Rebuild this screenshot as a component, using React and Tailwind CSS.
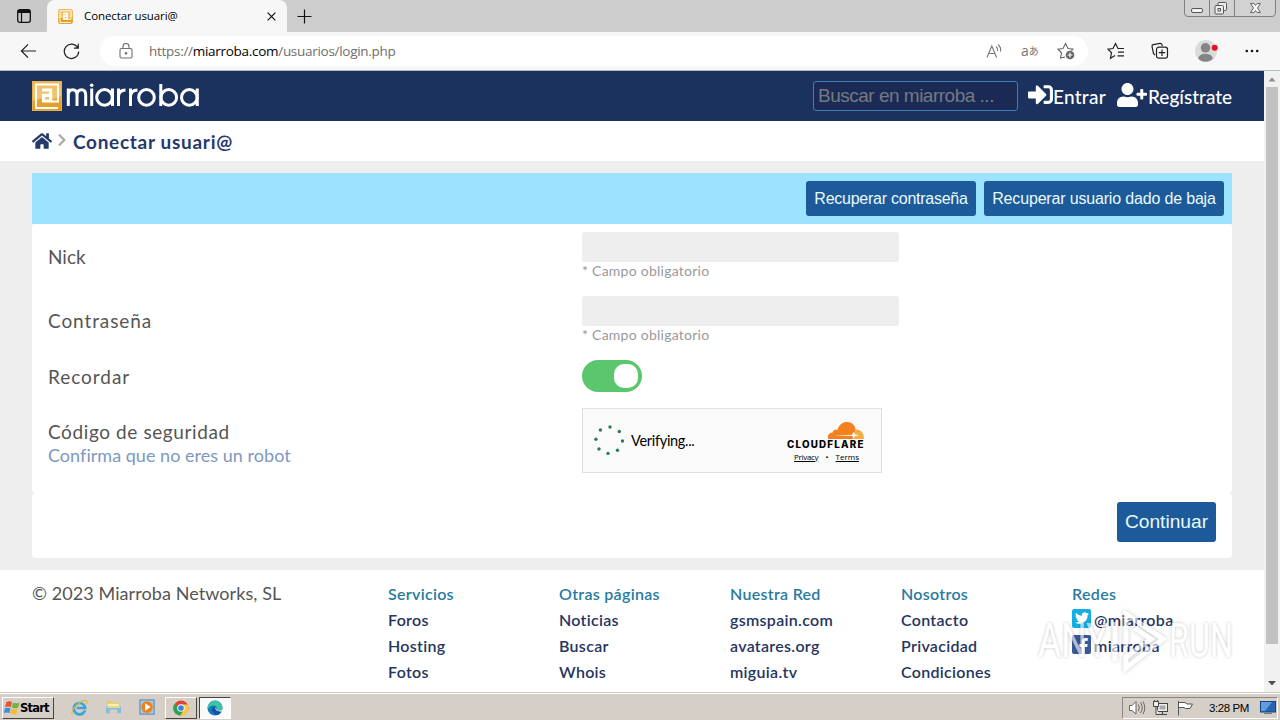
import React from "react";
import { FaHome, FaSignInAlt, FaUserPlus, FaChevronRight, FaTwitter, FaFacebookF } from "react-icons/fa";

const lato = "font-['Lato','Open_Sans',sans-serif]";
const arial = "font-['Liberation_Sans',sans-serif]";
const ui = "font-['Open_Sans','Noto_Sans',sans-serif]";

function AtLogo({ className, id }) {
  return (
    <svg viewBox="0 0 30 30" className={className}>
      <defs>
        <linearGradient id={id} x1="0" y1="0" x2="0" y2="1">
          <stop offset="0" stopColor="#f0b95a" />
          <stop offset="0.5" stopColor="#efc878" />
          <stop offset="1" stopColor="#e2a02c" />
        </linearGradient>
      </defs>
      <rect width="30" height="30" fill="#e8b04a" />
      <rect x="1" y="1" width="28" height="28" fill={`url(#${id})`} />
      <path d="M1 20C10 15 18 22 29 15V29H1Z" fill="#e09c22" opacity="0.75" />
      <path d="M26 27H4V3.5H26V20.5H19" fill="none" stroke="#fff" strokeWidth="1.8" />
      <path d="M10 9H18.6V21.5M18 14.3H11.6V20H18" fill="none" stroke="#fff" strokeWidth="3.2" />
    </svg>
  );
}

function TitleBar() {
  return (
    <div className="flex h-8 shrink-0 items-stretch bg-[#cdcdcd]">
      <div className="flex w-[47px] items-center justify-center rounded-br-md bg-[#c9c9c9]">
        <svg viewBox="0 0 14 14" className="h-3.5 w-3.5">
          <rect x="0.7" y="0.7" width="12.6" height="12.6" rx="2" fill="none" stroke="#111" strokeWidth="1.3" />
          <path d="M1 2Q1 1 2 1H12Q13 1 13 2V4H1Z" fill="#111" />
          <path d="M4.5 4V13" stroke="#111" strokeWidth="1.2" />
        </svg>
      </div>
      <div className="flex w-[240px] items-center rounded-t-lg bg-[#f7f7f7] pl-[11px] pr-[11px]">
        <AtLogo id="tabLogo" className="h-[15px] w-[15px] rounded-[3px]" />
        <span className={`${ui} ml-[11px] grow whitespace-nowrap text-[11.5px] leading-4 tracking-[-0.1px] text-black`}>Conectar usuari@</span>
        <svg viewBox="0 0 10 10" className="h-[9px] w-[9px]">
          <path d="M0.7 0.7L9.3 9.3M9.3 0.7L0.7 9.3" stroke="#111" strokeWidth="1.3" />
        </svg>
      </div>
      <div className="flex w-[35px] items-center justify-center">
        <svg viewBox="0 0 15 15" className="h-[15px] w-[15px]">
          <path d="M7.5 0.5V14.5M0.5 7.5H14.5" stroke="#111" strokeWidth="1.2" />
        </svg>
      </div>
      <div className="grow" />
      <svg viewBox="0 0 94 18" className="mr-[3px] h-[18px] w-[94px]">
        <path d="M1.5 0V13Q1.5 16.5 5 16.5H89Q92.5 16.5 92.5 13V0M26.5 0V16M51.5 0V16" fill="#d2d2d2" stroke="#808080" />
        <rect x="8.5" y="8.5" width="11" height="4" rx="1.5" fill="#f5f5f5" stroke="#555" />
        <rect x="35" y="2.5" width="8.5" height="8" rx="1" fill="#eee" stroke="#555" />
        <rect x="32" y="5.5" width="8.5" height="8.5" rx="1" fill="#eee" stroke="#555" />
        <rect x="35" y="8.5" width="2.5" height="2.5" fill="#eee" stroke="#555" />
        <path d="M67.5 3.5H71L72.5 5.5L74 3.5H77.5L74.5 8L77.5 12.5H74L72.5 10.5L71 12.5H67.5L70.5 8Z" fill="#f5f5f5" stroke="#666" />
      </svg>
    </div>
  );
}

function Toolbar() {
  return (
    <div className="flex h-[39px] shrink-0 items-center border-b border-[#b3bcbf] bg-[#f7f7f7]">
      <svg viewBox="0 0 18 16" className="ml-5 h-4 w-[17px]" fill="none" stroke="#222" strokeWidth="1.3">
        <path d="M17 8H1.5M8.5 1L1.5 8L8.5 15" />
      </svg>
      <svg viewBox="0 0 18 18" className="ml-[26px] h-[17px] w-[17px]" fill="none" stroke="#222" strokeWidth="1.3">
        <path d="M15.6 5A7.6 7.6 0 1 0 16.6 9M16.2 0.8V5.4H11.6" />
      </svg>
      <div className="ml-5 flex h-[30px] w-[988px] items-center rounded-full bg-white">
        <svg viewBox="0 0 14 16" className="ml-[19px] h-4 w-[14px]" fill="none" stroke="#707070" strokeWidth="1.1">
          <rect x="1" y="5.5" width="12" height="9.5" rx="1.5" />
          <path d="M4 5.5V3.5A3 3 0 0 1 10 3.5V5.5" />
          <circle cx="7" cy="10.3" r="0.8" fill="#707070" />
        </svg>
        <span className={`${ui} ml-4 grow whitespace-nowrap text-[13.5px] leading-5 tracking-[-0.29px] text-[#6e6e6e]`}>
          https://<span className="text-black">miarroba.com</span>/usuarios/login.php
        </span>
        <svg viewBox="0 0 17 16" className="h-4 w-[17px]" fill="none" stroke="#777" strokeWidth="1.1">
          <path d="M1 14.5L5.8 3L10.6 14.5M2.7 10.5H9M10 3.5Q12 5 11.5 8M12 1.5Q15.5 4.5 14.5 8.5" />
        </svg>
        <span className="ml-[18px] flex w-[18px] items-center whitespace-nowrap font-['Open_Sans','Noto_Sans_CJK_JP',sans-serif] leading-4 text-[#777]">
          <span className="text-[14px]">a</span><span className="text-[10px]">あ</span>
        </span>
        <svg viewBox="0 0 18 18" className="ml-[18px] mr-[13px] h-[18px] w-[18px]" fill="none" stroke="#666" strokeWidth="1.1">
          <path d="M8 15L3.5 16L4.5 10.8L1 7.2L6 6.5L8.5 1.5L11 6.5L16 7.2L14.5 8.7" />
          <circle cx="13" cy="13" r="4.3" fill="#666" stroke="none" />
          <path d="M13 10.6V15.4M10.6 13H15.4" stroke="#fff" />
        </svg>
      </div>
      <svg viewBox="0 0 18 18" className="ml-[19px] h-[18px] w-[18px]" fill="none" stroke="#222" strokeWidth="1.2">
        <path d="M8 13.5L3.5 16.2L4.5 10.8L1 7.2L6 6.5L8.5 1.5L11 6.5H17M11 10.2H17M10.5 13.8H17" />
      </svg>
      <svg viewBox="0 0 18 18" className="ml-[26px] h-[18px] w-[18px]" fill="none" stroke="#222" strokeWidth="1.2">
        <path d="M4 13L2.5 11.5L1 4.5Q0.8 3 2.3 2.7L9 1.4Q10.5 1.2 11 2.6L11.3 4" />
        <rect x="5.5" y="5.2" width="11" height="11" rx="2.2" />
        <path d="M11 7.5V14M7.8 10.7H14.2" />
      </svg>
      <svg viewBox="0 0 24 24" className="ml-[25px] h-6 w-6">
        <circle cx="12" cy="12" r="11" fill="#d8dcda" />
        <circle cx="11.5" cy="8.8" r="4.8" fill="#858585" />
        <path d="M4.2 19.5Q5 14.8 11.5 14.8Q18 14.8 18.8 19.5Q16 22.8 11.5 22.8Q7 22.8 4.2 19.5Z" fill="#858585" />
        <circle cx="20.7" cy="8.8" r="3" fill="#e81123" />
      </svg>
      <svg viewBox="0 0 14 4" className="ml-[27px] h-1 w-3.5" fill="#111">
        <circle cx="1.8" cy="2" r="1.3" /><circle cx="7" cy="2" r="1.3" /><circle cx="12.2" cy="2" r="1.3" />
      </svg>
    </div>
  );
}

function SiteHeader() {
  return (
    <header className="flex h-[50px] items-center bg-[#1b315e] pl-8 pr-8 text-white">
      <AtLogo id="siteLogo" className="h-[30px] w-[30px]" />
      <svg viewBox="0 0 136 30" className="ml-0.5 h-[30px] w-[136px]" fill="none" stroke="#fff" strokeWidth="3">
        <path d="M4.3 25V7.5M4.3 14Q4.5 8.7 8.7 8.7Q13 8.7 13 14V25M13 14Q13.2 8.7 17.5 8.7Q21.7 8.7 21.7 14V25M27.7 7.5V25M48.5 7.5V25M54.5 25V7.5M54.5 15Q55 9.2 61.5 8.9M66.5 25V7.5M66.5 15Q67 9.2 73.5 8.9M96.8 3V25M133.3 7.5V25" />
        <circle cx="27.7" cy="4.2" r="1.8" fill="#fff" stroke="none" />
        <circle cx="40.5" cy="16.4" r="7.8" />
        <circle cx="82.5" cy="16.4" r="7.8" />
        <circle cx="104.8" cy="16.4" r="7.8" />
        <circle cx="125.3" cy="16.4" r="7.8" />
      </svg>
      <div className="grow" />
      <div className={`${arial} flex h-[30px] w-[205px] items-center whitespace-nowrap rounded-[3px] border border-[#3d7fb5] bg-[#1b2a55] pl-1 text-[19px] tracking-[-0.5px] text-[#757984]`}>
        Buscar en miarroba ...
      </div>
      <div className="ml-2.5 flex w-[79px] items-center">
        <FaSignInAlt className="-mt-[3px] h-[25px] w-[25px] shrink-0" />
        <span className={`${lato} mt-px whitespace-nowrap text-[19px] font-medium leading-6 tracking-[0.25px]`}>Entrar</span>
      </div>
      <div className="ml-[10px] flex w-[115px] items-center">
        <FaUserPlus className="-mt-[3px] h-[30px] w-[30px] shrink-0" />
        <span className={`${lato} ml-px mt-px whitespace-nowrap text-[19px] font-medium leading-6`}>Regístrate</span>
      </div>
    </header>
  );
}

function Field() {
  return (
    <div>
      <div className="h-[30px] w-[317px] rounded-[3px] bg-[#eeeeee]" />
      <div className={`${lato} h-[18px] text-[14px] leading-[18px] tracking-[0.25px] text-[#999]`}>* Campo obligatorio</div>
    </div>
  );
}

const labelText = `${lato} text-[19px] leading-6 whitespace-nowrap text-[#555]`;
const formButton = `${arial} flex items-center justify-center whitespace-nowrap rounded-[3px] bg-[#1d5a99] text-[#e8faff]`;

function Cloudflare() {
  const dots = [[15, 2], [24.3, 6.5], [27.5, 16], [22.5, 25.2], [13, 28.4], [4, 24], [0.9, 14.3], [5.4, 5]];
  return (
    <div className="flex h-[65px] w-[300px] items-center border border-[#e0e0e0] bg-[#fafafa] pl-[11px]">
      <svg viewBox="-1 0 31 31" className="h-[31px] w-[31px]" fill="#2c7a55">
        {dots.map(([x, y]) => <circle key={x} cx={x} cy={y} r="1.7" />)}
      </svg>
      <span className={`${lato} ml-[6px] w-[156px] text-[14.5px] leading-5 tracking-[-0.3px] text-black`}>Verifying...</span>
      <div className="w-[80px]">
        <svg viewBox="0 0 80 19" className="-ml-px mt-px h-[19px] w-[80px]">
          <path d="M42 18Q41 12 46.5 11.5Q48 7.5 51.5 9C53 3.5 57 1 61 1C66 1 69 4.5 69.8 9L67 18Z" fill="#f4801f" />
          <path d="M66 18L70.5 8.5Q78 9 78 18Z" fill="#f9ab41" />
          <path d="M46 15L66 13.7L68 10.5L69 13.5L73 14.3L69 15L68 17.5L66 14.8Z" fill="#fff" />
        </svg>
        <div className="mt-px h-[8px] whitespace-nowrap font-['Inter',sans-serif] text-[9.8px] font-extrabold leading-[8px] tracking-[1.2px] text-black">CLOUDFLARE</div>
        <div className="ml-[7px] mt-[3px] flex h-[10px] w-[65px] items-center justify-between font-['Open_Sans',sans-serif] text-[8px] font-medium leading-[10px] text-black">
          <span className="tracking-[-0.3px] underline">Privacy</span><span>•</span><span className="underline">Terms</span>
        </div>
      </div>
    </div>
  );
}

function LoginForm() {
  return (
    <main className="mx-8 mt-3 w-[1200px]">
      <div className="flex h-[51px] items-center justify-end gap-2 bg-[#9ce3ff] pr-2">
        <div className={`${formButton} h-[35px] w-[170px] text-[16px] tracking-[-0.25px]`}>Recuperar contraseña</div>
        <div className={`${formButton} h-[35px] w-[240px] text-[16px] tracking-[-0.17px]`}>Recuperar usuario dado de baja</div>
      </div>
      <div className="grid h-[269px] grid-cols-[534px_1fr] grid-rows-[64px_64px_48px_1fr] rounded bg-white pl-4 pt-2">
        <div className={`${labelText} pt-[13px]`}>Nick</div>
        <Field />
        <div className={`${labelText} pt-[13px] tracking-[0.9px]`}>Contraseña</div>
        <Field />
        <div className={`${labelText} pt-[5px] tracking-[0.95px]`}>Recordar</div>
        <div className="flex h-8 w-[60px] items-center justify-end rounded-2xl bg-[#5bc66e] pr-1">
          <div className="h-6 w-6 rounded-[10px] bg-white" />
        </div>
        <div className="pt-[12px]">
          <div className={`${labelText} tracking-[0.6px]`}>Código de seguridad</div>
          <div className={`${lato} -mt-px whitespace-nowrap text-[18px] leading-6 tracking-[0.03px] text-[#7d98c0]`}>Confirma que no eres un robot</div>
        </div>
        <Cloudflare />
      </div>
      <div className="flex h-[65px] items-start justify-end rounded bg-white pr-4 pt-[9px]">
        <div className={`${formButton} h-10 w-[99px] text-[19.2px]`}>Continuar</div>
      </div>
    </main>
  );
}

const columns = [
  ["Servicios", ["Foros", "Hosting", "Fotos"]],
  ["Otras páginas", ["Noticias", "Buscar", "Whois"]],
  ["Nuestra Red", ["gsmspain.com", "avatares.org", "miguia.tv"]],
  ["Nosotros", ["Contacto", "Privacidad", "Condiciones"]],
];

function Footer() {
  return (
    <footer className={`${lato} mt-3 flex h-[122px] overflow-hidden bg-white pl-8 pt-[11px]`}>
      <div className="-mt-px w-[356px] text-[18px] leading-[26px] tracking-[0.08px] text-[#555]">© 2023 Miarroba Networks, SL</div>
      {columns.map(([title, links]) => (
        <div key={title} className="w-[171px] whitespace-nowrap text-[16px] font-semibold leading-[26px] tracking-[0.3px] text-[#26355f]">
          <div className="text-[#287ba0]">{title}</div>
          {links.map((l) => <div key={l}>{l}</div>)}
        </div>
      ))}
      <div className="text-[16px] font-semibold leading-[26px] tracking-[0.35px] text-[#26355f]">
        <div className="text-[#287ba0]">Redes</div>
        <div className="flex h-[26px] items-center">
          <span className="-mt-1 mr-[3px] flex h-[19px] w-[19px] items-center justify-center rounded-[2px] bg-[#14aee5] text-white"><FaTwitter className="h-[14px] w-[14px]" /></span>
          @miarroba
        </div>
        <div className="flex h-[26px] items-center">
          <span className="-mt-1 mr-[3px] flex h-[19px] w-[19px] items-end justify-end rounded-[2px] bg-[#3b5998] pr-[2px] text-white"><FaFacebookF className="h-[16px] w-[11px]" /></span>
          miarroba
        </div>
      </div>
    </footer>
  );
}

function Scrollbar() {
  return (
    <div className="flex w-4 shrink-0 flex-col items-center bg-[#f1f1f1]">
      <svg viewBox="0 0 16 16" className="h-4 w-4"><path d="M4.5 10.5L8 6.5L11.5 10.5Z" fill="#8b8b8b" /></svg>
      <div className="h-[557px] w-3 bg-[#c1c1c1]" />
      <div className="grow" />
      <svg viewBox="0 0 16 16" className="h-[17px] w-4"><path d="M4 5.5H12L8 10Z" fill="#505050" /></svg>
    </div>
  );
}

function Watermark() {
  return (
    <div className="pointer-events-none absolute left-[1038px] top-[608px] flex h-[66px] w-[200px] items-center font-['Roboto',sans-serif] text-[49px] leading-[66px] text-white opacity-60 [text-shadow:0_0_4px_rgba(0,0,0,0.4)]">
      <span className="w-[71px] origin-left scale-x-[0.73]">ANY</span>
      <svg viewBox="0 0 60 66" className="h-[66px] w-[60px] shrink-0 drop-shadow-[0_0_2px_rgba(0,0,0,0.35)]" fill="none" stroke="#fff" strokeWidth="5">
        <path d="M6 14V53M17 39V6L54 31L17 60V49L42 31L26 20" />
      </svg>
      <span className="origin-left scale-x-[0.66]">RUN</span>
    </div>
  );
}

function Taskbar() {
  return (
    <div className="flex h-[28px] shrink-0 items-center border-t border-[#c9c7ba] bg-[#d5cfc7] pl-0.5 pr-0.5 shadow-[inset_0_1px_0_#fff]">
      <div className="mt-0.5 flex h-[22px] w-[52px] items-center border border-b-[#444] border-l-white border-r-[#444] border-t-white pl-px">
        <svg viewBox="0 0 16 16" className="h-4 w-4">
          <path d="M2.5 2Q5 0.5 8 2L6.8 7.2Q4 6 1 7.2Z" fill="#e9562b" />
          <path d="M9 2.5Q12 4 15.5 2.5L14 7.8Q11 9 7.8 7.5Z" fill="#73b53b" />
          <path d="M0.8 8.2Q4 7 6.6 8.4L5.3 13.3Q3 12 0 13Z" fill="#3f8fe0" />
          <path d="M7.6 8.8Q10.5 10 13.8 8.9L12.3 14Q9 15 6.3 13.6Z" fill="#f7bd28" />
        </svg>
        <span className="font-['DejaVu_Sans',sans-serif] text-[11.5px] font-bold leading-4 tracking-[-0.8px] text-black">Start</span>
      </div>
      <svg viewBox="0 0 18 18" className="ml-[17px] mt-0.5 h-[17px] w-[17px]">
        <path d="M14.8 12A6 6 0 1 1 15 9.5H6" fill="none" stroke="#39a5df" strokeWidth="2.8" />
        <path d="M1.5 16.5C-1.5 12 12 -1 16.5 2Q17.3 3 16 5" fill="none" stroke="#e2b73d" strokeWidth="1.3" />
      </svg>
      <svg viewBox="0 0 18 18" className="ml-[17px] mt-0.5 h-[17px] w-[17px]">
        <path d="M2 3L7 2L8 4H16V9H2Z" fill="#e7c75f" /><path d="M3 5H15V10H3Z" fill="#fff1aa" />
        <path d="M1 8H17V15H13V11H5V15H1Z" fill="#82bddb" /><path d="M2 8H16V9.5H2Z" fill="#f3da83" />
      </svg>
      <svg viewBox="0 0 18 18" className="ml-[17px] mt-0.5 h-[17px] w-[17px]">
        <rect x="1" y="1" width="15" height="15" fill="#a8cae9" stroke="#4782b6" />
        <circle cx="8.5" cy="8.5" r="6.2" fill="#ee8218" /><path d="M6.5 4.5L12.3 8.5L6.5 12.5Z" fill="#fff" />
      </svg>
      <div className="ml-[9px] mt-0.5 flex h-[22px] w-8 items-center justify-center border border-b-[#444] border-l-white border-r-[#444] border-t-white">
        <svg viewBox="0 0 18 18" className="h-4 w-4">
          <circle cx="9" cy="9" r="8.5" fill="#dc4435" />
          <path d="M9 9L1.2 5A8.5 8.5 0 0 0 8 17.5L12.5 11Z" fill="#29a450" />
          <path d="M9 5H16.6A8.5 8.5 0 0 1 8 17.5L12.5 11Z" fill="#f8cb38" />
          <circle cx="9" cy="9" r="4.2" fill="#fff" /><circle cx="9" cy="9" r="3.2" fill="#397fe4" />
        </svg>
      </div>
      <div className="ml-0.5 mt-0.5 flex h-[22px] w-8 items-center justify-center border border-b-white border-l-[#444] border-r-white border-t-[#444] bg-[#fafafa]">
        <svg viewBox="0 0 18 18" className="h-4 w-4">
          <circle cx="9" cy="9" r="8.5" fill="#167ac3" />
          <path d="M1 6.5A8.5 8.5 0 0 1 17.5 9Q16.5 12 11 11.5Q12 6 6 6.2Q3 6.3 0.8 10Z" fill="#39c6a4" />
          <path d="M9.5 7Q8 12.5 16.5 13Q15 15.5 12 17Q5 15 5.5 10Q6.5 7 9.5 7Z" fill="#1252a0" />
          <path d="M10 8Q10 11.5 13 12Q17 12 17.5 9.5L18 13H14Q8 12 10 8Z" fill="#fafafa" />
        </svg>
      </div>
      <div className="grow" />
      <div className="mt-0.5 flex h-[22px] w-[156px] items-center border border-b-white border-l-[#8a8680] border-r-white border-t-[#8a8680] pl-[5px]">
        <svg viewBox="0 0 18 18" className="h-[18px] w-[18px]" fill="#fff" stroke="#666" strokeWidth="1">
          <path d="M1.5 6.5H4L8 2.5V15L4 11.5H1.5Z" /><path d="M10.3 5.5Q12.5 8.8 10.3 12M12.5 3.5Q16 8.8 12.5 14M15 2.5Q18.5 8.8 15 15" fill="none" />
        </svg>
        <svg viewBox="0 0 18 18" className="ml-[6px] h-[18px] w-[18px]" fill="#eee" stroke="#444">
          <rect x="5.5" y="4.5" width="10" height="8" /><path d="M10.5 12.5V15.5M6.5 15.5H15" /><path d="M1.5 2.5H6.5V7.5H1.5ZM4 7.5V15.5H7M2.5 1V3M5.5 1V3" /><path d="M7.5 6.5H13.5V10.5H7.5Z" fill="#aaa" stroke="none" />
        </svg>
        <svg viewBox="0 0 18 18" className="ml-[6px] h-[18px] w-[18px]" fill="#fff" stroke="#555">
          <path d="M2.5 2V16.5M2.5 3.5H9L11 5H16.5L14 9.5H9.5L8 8.5H2.5Z" />
        </svg>
        <span className="ml-[15px] whitespace-nowrap font-['Liberation_Sans',sans-serif] text-[11.5px] leading-4 tracking-[-0.4px] text-black">3:28 PM</span>
        <svg viewBox="0 0 16 14" className="ml-[11px] h-3.5 w-4 shrink-0">
          <rect x="0.5" y="0.5" width="15" height="10.5" fill="#2866b5" stroke="#16427e" /><path d="M1 1H12L5 10H1Z" fill="#5f9ee0" /><path d="M4 12.5H12" stroke="#777" />
        </svg>
      </div>
    </div>
  );
}

export default function App() {
  return (
    <div className="relative flex h-[720px] w-[1280px] flex-col overflow-hidden bg-[#eeeeee]">
      <TitleBar />
      <Toolbar />
      <div className="flex h-[621px]">
        <div className="w-[1264px] shrink-0">
          <SiteHeader />
          <div className={`${lato} flex h-10 items-center bg-white pl-8 text-[#26396b]`}>
            <FaHome className="h-5 w-5" />
            <FaChevronRight className="-mt-0.5 ml-[5px] mr-[6px] h-[14px] w-[10px] text-[#aaa]" />
            <span className="mt-0.5 text-[19px] font-bold leading-6 tracking-[0.7px]">Conectar usuari@</span>
          </div>
          <LoginForm />
          <Footer />
        </div>
        <Scrollbar />
      </div>
      <Taskbar />
      <Watermark />
    </div>
  );
}
